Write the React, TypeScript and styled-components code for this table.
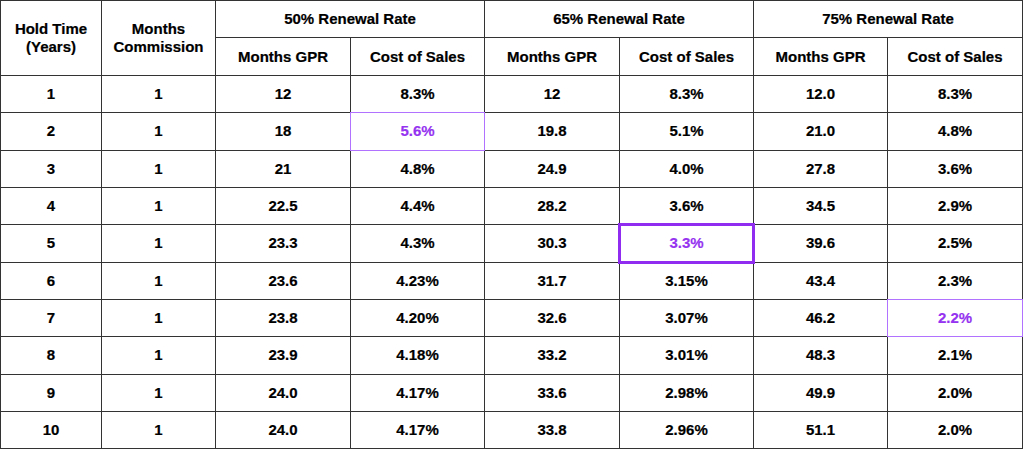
import React from 'react'
import styled, { createGlobalStyle } from 'styled-components'

const GlobalStyle = createGlobalStyle`
  html, body {
    margin: 0;
    padding: 0;
    background: #ffffff;
  }
  body {
    font-family: 'Liberation Sans', Arial, sans-serif;
  }
`

const Table = styled.table`
  width: 1023px;
  border-collapse: collapse;
  table-layout: fixed;
  font-size: 15px;
  font-weight: 700;
  color: #000;
`

const Row = styled.tr<{ $h: number }>`
  height: ${({ $h }) => $h}px;
`

const Cell = styled.td<{ $mark?: 'thin' | 'thick' }>`
  border: 1px solid #333;
  padding: 0 4px;
  text-align: center;
  vertical-align: middle;
  line-height: 18px;
  color: ${({ $mark }) => ($mark ? '#9533f0' : '#000')};
  -webkit-text-stroke: 0.2px currentColor;

  ${({ $mark }) =>
    $mark === 'thin' &&
    `
    position: relative;
    &::after {
      content: '';
      position: absolute;
      top: -1px;
      left: -1px;
      right: -1px;
      bottom: -1px;
      border: 1px solid #b172ff;
      z-index: 1;
      pointer-events: none;
    }
  `}

  ${({ $mark }) =>
    $mark === 'thick' &&
    `
    position: relative;
    &::after {
      content: '';
      position: absolute;
      top: -2px;
      left: -2px;
      right: -2px;
      bottom: -2px;
      border: 3px solid #8f2cf0;
      z-index: 1;
      pointer-events: none;
    }
  `}
`

const HeadCell = styled(Cell).attrs({ as: 'th' })`
  font-weight: 700;
`

const widths = [101, 114, 135, 134, 135, 134, 134, 135]

type Mark = 'thin' | 'thick' | undefined

const rows: { values: string[]; marks?: Record<number, Mark> }[] = [
  { values: ['1', '1', '12', '8.3%', '12', '8.3%', '12.0', '8.3%'] },
  { values: ['2', '1', '18', '5.6%', '19.8', '5.1%', '21.0', '4.8%'], marks: { 3: 'thin' } },
  { values: ['3', '1', '21', '4.8%', '24.9', '4.0%', '27.8', '3.6%'] },
  { values: ['4', '1', '22.5', '4.4%', '28.2', '3.6%', '34.5', '2.9%'] },
  { values: ['5', '1', '23.3', '4.3%', '30.3', '3.3%', '39.6', '2.5%'], marks: { 5: 'thick' } },
  { values: ['6', '1', '23.6', '4.23%', '31.7', '3.15%', '43.4', '2.3%'] },
  { values: ['7', '1', '23.8', '4.20%', '32.6', '3.07%', '46.2', '2.2%'], marks: { 7: 'thin' } },
  { values: ['8', '1', '23.9', '4.18%', '33.2', '3.01%', '48.3', '2.1%'] },
  { values: ['9', '1', '24.0', '4.17%', '33.6', '2.98%', '49.9', '2.0%'] },
  { values: ['10', '1', '24.0', '4.17%', '33.8', '2.96%', '51.1', '2.0%'] },
]

const rates = ['50%', '65%', '75%']

export default function App() {
  return (
    <>
      <GlobalStyle />
      <Table>
        <colgroup>
          {widths.map((w, i) => (
            <col key={i} style={{ width: w }} />
          ))}
        </colgroup>
        <thead>
          <Row $h={37}>
            <HeadCell rowSpan={2}>
              Hold Time
              <br />
              (Years)
            </HeadCell>
            <HeadCell rowSpan={2}>
              Months
              <br />
              Commission
            </HeadCell>
            {rates.map((r) => (
              <HeadCell key={r} colSpan={2}>
                {r} Renewal Rate
              </HeadCell>
            ))}
          </Row>
          <Row $h={38}>
            {rates.map((r) => (
              <React.Fragment key={r}>
                <HeadCell>Months GPR</HeadCell>
                <HeadCell>Cost of Sales</HeadCell>
              </React.Fragment>
            ))}
          </Row>
        </thead>
        <tbody>
          {rows.map((row, ri) => (
            <Row key={ri} $h={37.33}>
              {row.values.map((v, ci) => (
                <Cell key={ci} $mark={row.marks?.[ci]}>
                  {v}
                </Cell>
              ))}
            </Row>
          ))}
        </tbody>
      </Table>
    </>
  )
}
